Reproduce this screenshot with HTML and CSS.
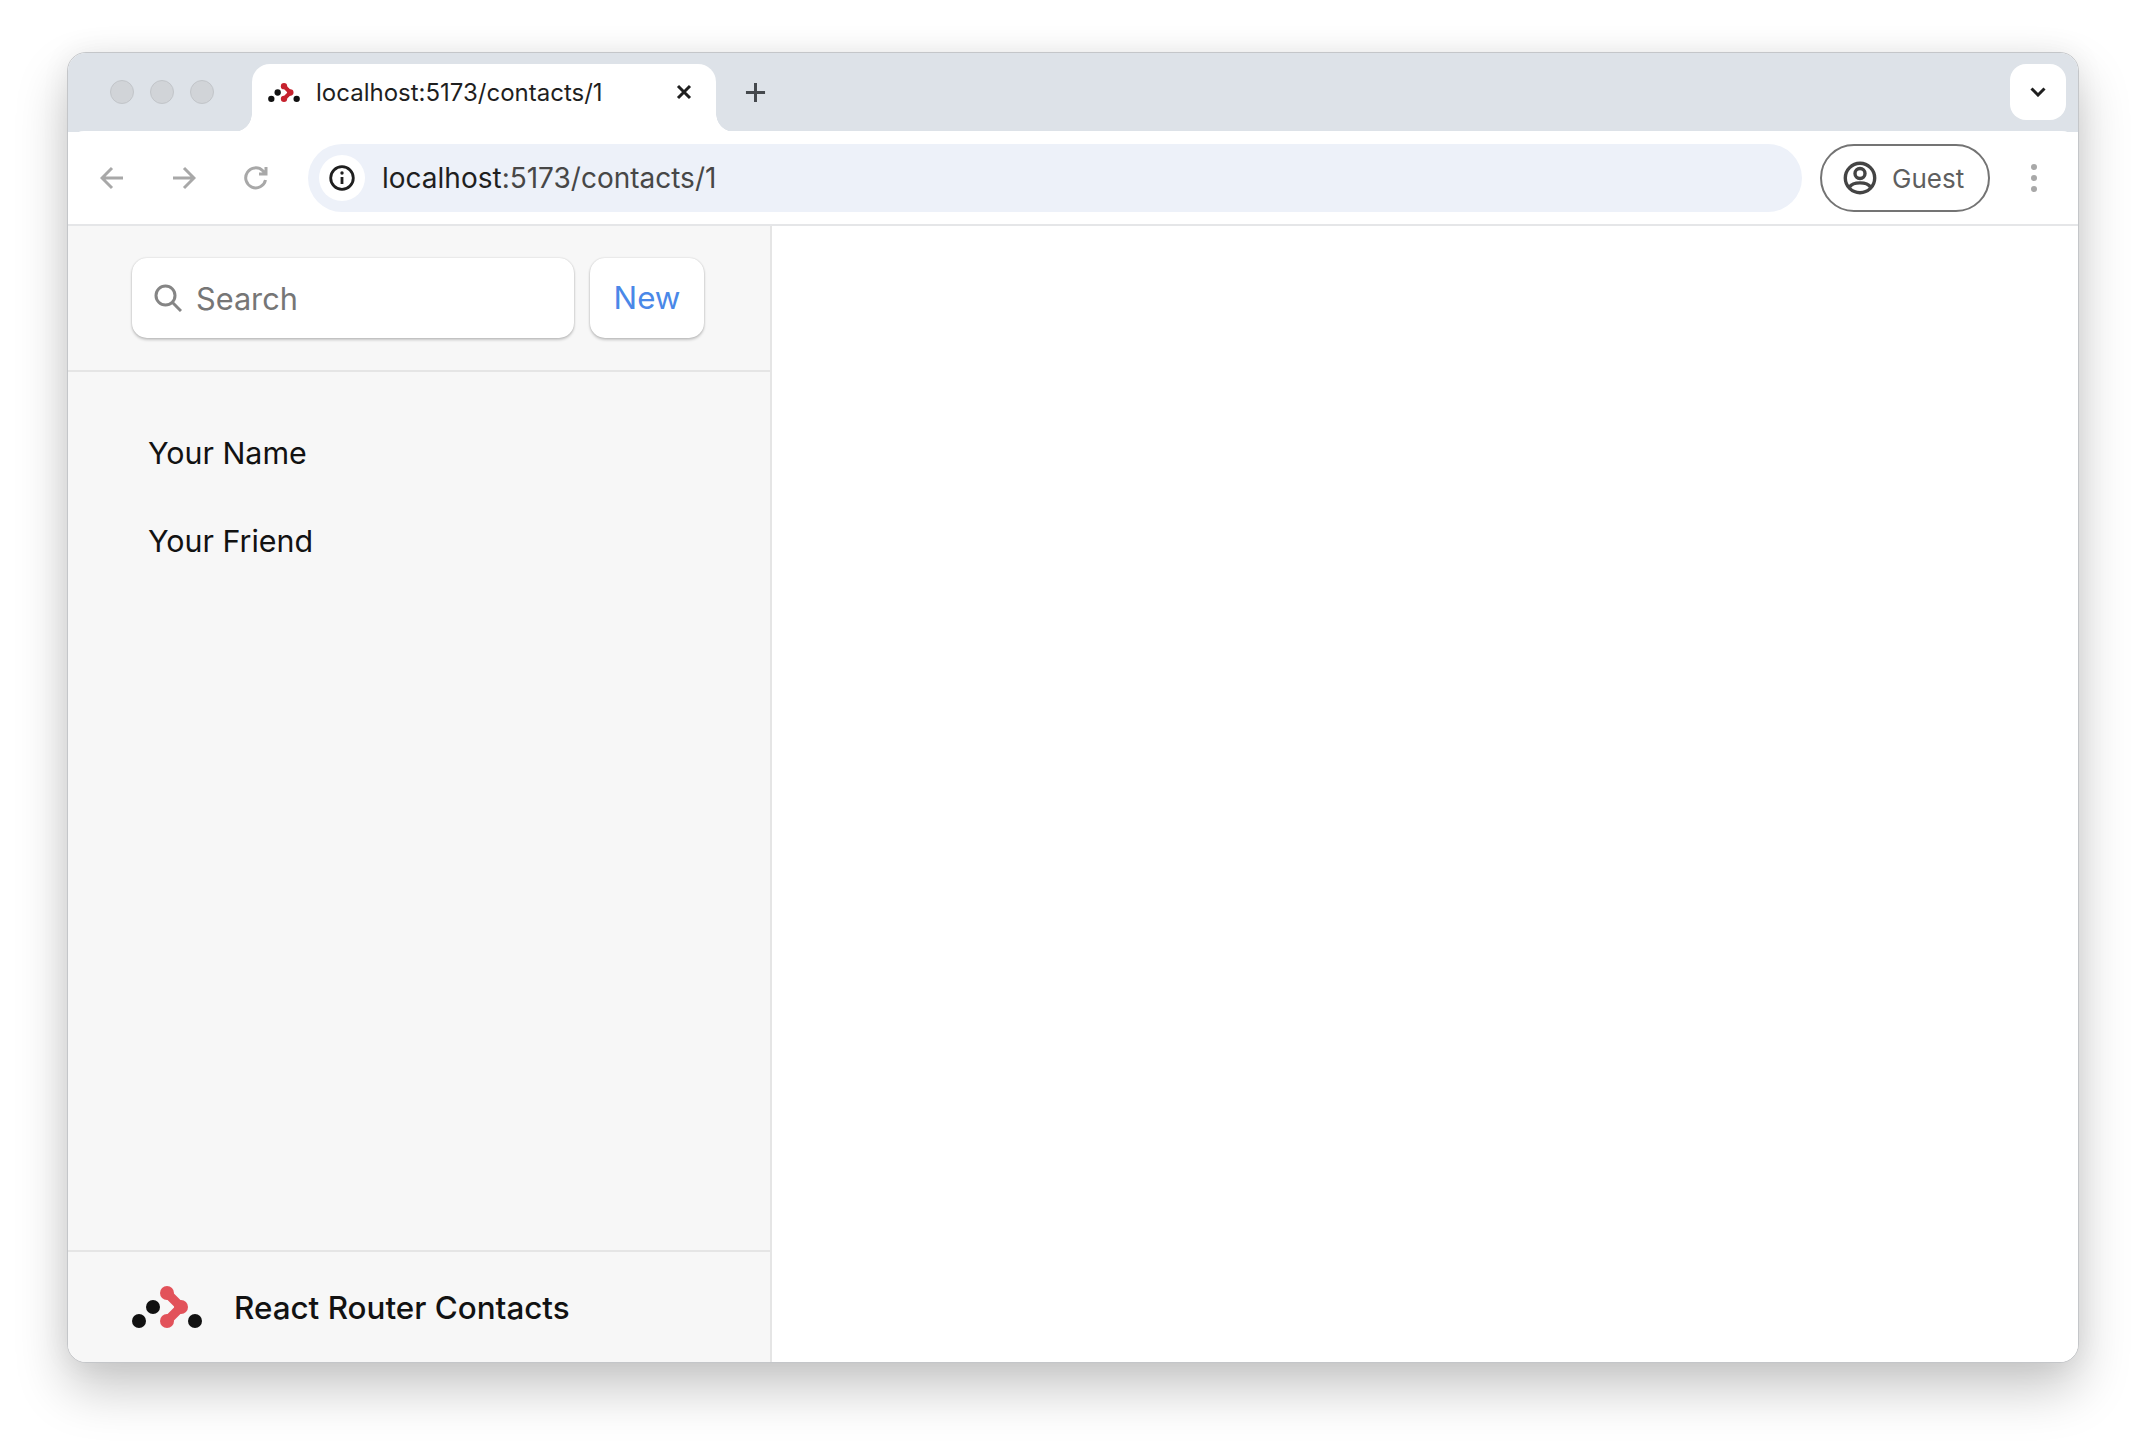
FILE: index.html
```html
<!DOCTYPE html>
<html lang="en">
<head>
<meta charset="utf-8">
<title>React Router Contacts</title>
<link rel="stylesheet" href="styles.css">
</head>
<body>
<svg class="defs" width="0" height="0" aria-hidden="true">
  <symbol id="logo" viewBox="0 0 70 42">
    <circle class="logo-dot" cx="7" cy="35" r="7"/>
    <circle class="logo-dot" cx="21" cy="21" r="7"/>
    <circle class="logo-dot" cx="63" cy="35" r="7"/>
    <path class="logo-neck" d="M35 7 L49 21 L35 35"/>
    <circle class="logo-node" cx="35" cy="7" r="7"/>
    <circle class="logo-node" cx="49" cy="21" r="7"/>
    <circle class="logo-node" cx="35" cy="35" r="7"/>
  </symbol>
</svg>
<div class="window">
  <div class="strip">
    <div class="lights"><span class="light"></span><span class="light"></span><span class="light"></span></div>
    <div class="tab">
      <svg class="favicon"><use href="#logo"/></svg>
      <span class="tab-title">localhost:5173/contacts/1</span>
      <svg class="tab-close" viewBox="0 0 16 16"><path d="M2 2 L14 14 M14 2 L2 14"/></svg>
    </div>
    <div class="new-tab"><svg viewBox="0 0 22 22"><path d="M11 1 V21 M1 11 H21"/></svg></div>
    <div class="tab-menu"><svg viewBox="0 0 16 10"><path d="M1.5 1.5 L8 8 L14.5 1.5"/></svg></div>
  </div>
  <div class="toolbar">
    <svg class="nav-icon" viewBox="0 0 24 24"><path d="M23 12 H2 M12 2 L2 12 L12 22"/></svg>
    <svg class="nav-icon" viewBox="0 0 24 24"><path d="M1 12 H22 M12 2 L22 12 L12 22"/></svg>
    <svg class="nav-icon" viewBox="0 0 24 24"><path d="M21.5 14 A10 10 0 1 1 18.8 4.8 L22 8 M22 1 V8 H15"/></svg>
    <div class="omnibox">
      <span class="info">
        <svg viewBox="0 0 26 26"><circle class="info-ring" cx="13" cy="13" r="11.3"/><path class="info-i" d="M13 12 V19"/><circle class="info-dot" cx="13" cy="8" r="1.7"/></svg>
      </span>
      <span class="url"><span class="url-host">localhost</span>:5173/contacts/1</span>
    </div>
    <div class="profile">
      <svg viewBox="0 0 34 34"><circle cx="17" cy="17" r="14.7"/><circle cx="17" cy="12.5" r="5"/><path d="M6.5 26 C10 20.5 24 20.5 27.5 26"/></svg>
      <span class="profile-name">Guest</span>
    </div>
    <div class="more"><span class="more-dot"></span><span class="more-dot"></span><span class="more-dot"></span></div>
  </div>
  <div class="page">
    <aside class="sidebar">
      <div class="sidebar-head">
        <div class="search">
          <svg viewBox="0 0 28 28"><circle cx="11.5" cy="11.5" r="9.5"/><path d="M18.5 18.5 L27 27"/></svg>
          <span class="search-text">Search</span>
        </div>
        <div class="new-btn">New</div>
      </div>
      <nav class="contacts">
        <div class="contact">Your Name</div>
        <div class="contact">Your Friend</div>
      </nav>
      <div class="sidebar-foot">
        <svg class="foot-logo"><use href="#logo"/></svg>
        <span class="foot-title">React Router Contacts</span>
      </div>
    </aside>
    <main class="detail"></main>
  </div>
</div>
</body>
</html>
```
FILE: styles.css
```css
* { box-sizing: border-box; }
html, body { height: 100%; }
body {
  margin: 0;
  padding: 52px 0 0 67px;
  background: #fff;
  font-family: "Inter", "Liberation Sans", sans-serif;
  color: #121212;
  overflow: hidden;
}
.defs { position: absolute; }
.logo-dot { fill: #111; }
.logo-neck { fill: none; stroke: var(--logo-red, #e2525a); stroke-width: 9; stroke-linejoin: round; }
.logo-node { fill: var(--logo-red, #e2525a); }

.window {
  width: 2012px;
  height: 1311px;
  display: flex;
  flex-direction: column;
  border: 1px solid #c4c6c9;
  border-radius: 19px;
  overflow: hidden;
  background: #fff;
  box-shadow: 0 26px 52px rgba(0, 0, 0, .22), 0 0 30px rgba(0, 0, 0, .06);
}

.strip {
  height: 79px;
  flex: none;
  padding-top: 11px;
  display: flex;
  align-items: flex-start;
  background: #dde2e8;
}
.lights { width: 184px; height: 56px; padding-left: 42px; display: flex; align-items: center; gap: 16px; flex: none; }
.light { width: 24px; height: 24px; border-radius: 50%; background: #d1d4d8; border: 1px solid #c2c5c9; }
.tab {
  position: relative;
  width: 464px;
  height: 68px;
  padding: 0 24px 12px 16px;
  display: flex;
  align-items: center;
  flex: none;
  background: #fff;
  border-radius: 18px 18px 0 0;
}
.tab::before, .tab::after {
  content: "";
  position: absolute;
  bottom: 0;
  width: 18px;
  height: 18px;
}
.tab::before { left: -18px; background: radial-gradient(circle at 0 0, transparent 17.5px, #fff 18px); }
.tab::after { right: -18px; background: radial-gradient(circle at 100% 0, transparent 17.5px, #fff 18px); }
.favicon { width: 32px; height: 19px; flex: none; --logo-red: #c6222e; }
.tab-title { margin-left: 16px; font-size: 24px; color: #1f1f1f; white-space: nowrap; }
.tab-close { width: 16px; height: 16px; margin-left: auto; fill: none; stroke: #1f1f1f; stroke-width: 3; }
.new-tab { width: 78px; height: 56px; display: flex; align-items: center; justify-content: center; flex: none; }
.new-tab svg { width: 21px; height: 21px; fill: none; stroke: #45494d; stroke-width: 3.2; }
.tab-menu {
  width: 56px;
  height: 56px;
  margin-left: auto;
  margin-right: 12px;
  display: flex;
  align-items: center;
  justify-content: center;
  flex: none;
  background: #fff;
  border-radius: 16px;
}
.tab-menu svg { width: 16px; height: 10px; fill: none; stroke: #1f1f1f; stroke-width: 3; }

.toolbar {
  height: 95px;
  margin-top: -1px;
  flex: none;
  padding: 1px 41px 0 32px;
  display: flex;
  align-items: center;
  background: #fff;
  border-bottom: 2px solid #e5e6e8;
  border-radius: 16px 16px 0 0;
  position: relative;
}
.nav-icon { width: 24px; height: 24px; margin-right: 48px; flex: none; fill: none; stroke: #a8a8a8; stroke-width: 3; }
.nav-icon:nth-of-type(3) { margin-right: 40px; }
.omnibox {
  flex: 1;
  height: 68px;
  padding-left: 11px;
  display: flex;
  align-items: center;
  background: #edf1f9;
  border-radius: 34px;
}
.info { width: 46px; height: 46px; display: flex; align-items: center; justify-content: center; flex: none; background: #fff; border-radius: 50%; }
.info svg { width: 26px; height: 26px; }
.info-ring { fill: none; stroke: #1f1f1f; stroke-width: 2.8; }
.info-i { fill: none; stroke: #1f1f1f; stroke-width: 2.8; }
.info-dot { fill: #1f1f1f; }
.url { margin-left: 17px; font-size: 28px; color: #474747; white-space: nowrap; }
.url-host { color: #1f1f1f; }
.profile {
  width: 170px;
  height: 68px;
  margin-left: 18px;
  padding-left: 21px;
  display: flex;
  align-items: center;
  flex: none;
  border: 2px solid #747474;
  border-radius: 34px;
}
.profile svg { width: 34px; height: 34px; flex: none; fill: none; stroke: #444; stroke-width: 3.4; }
.profile-name { margin-left: 15px; font-size: 26px; color: #5f5f5f; }
.more { margin-left: 41px; width: 6px; display: flex; flex-direction: column; gap: 5px; flex: none; }
.more-dot { width: 6px; height: 6px; border-radius: 50%; background: #a8a8a8; }

.page { flex: 1; min-height: 0; display: flex; }
.sidebar {
  width: 704px;
  display: flex;
  flex-direction: column;
  flex: none;
  background: #f7f7f7;
  border-right: 2px solid #e5e5e5;
}
.sidebar-head {
  height: 146px;
  padding: 32px 0 32px 64px;
  display: flex;
  gap: 16px;
  flex: none;
  border-bottom: 2px solid #e5e5e5;
}
.search, .new-btn {
  height: 80px;
  background: #fff;
  border-radius: 15px;
  box-shadow: 0 0 2px rgba(0, 0, 0, .18), 0 2px 3px rgba(0, 0, 0, .2);
}
.search { width: 442px; padding-left: 22px; display: flex; align-items: center; }
.search svg { width: 28px; height: 28px; flex: none; fill: none; stroke: #858585; stroke-width: 3; }
.search-text { margin-left: 14px; font-size: 30.7px; color: #767676; }
.new-btn { width: 114px; display: flex; align-items: center; justify-content: center; font-size: 31.3px; color: #4a88e8; }
.contacts { flex: 1; padding: 37px 0 0 80px; }
.contact { height: 88px; display: flex; align-items: center; font-size: 30.4px; color: #121212; }
.sidebar-foot {
  height: 112px;
  padding-left: 64px;
  display: flex;
  align-items: center;
  flex: none;
  border-top: 2px solid #e5e5e5;
}
.foot-logo { width: 70px; height: 42px; flex: none; }
.foot-title { margin-left: 32px; padding-top: 2px; font-size: 31.4px; font-weight: 500; color: #121212; }
.detail { flex: 1; background: #fff; }
```
